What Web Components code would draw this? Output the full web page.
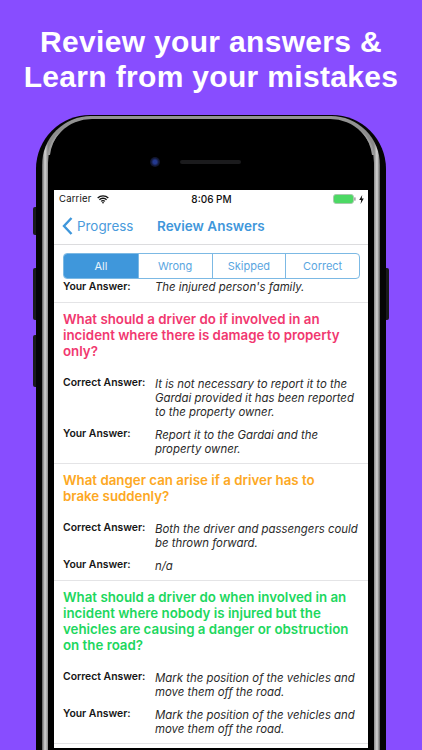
<!DOCTYPE html>
<html>
<head>
<meta charset="utf-8">
<style>
  html, body { margin: 0; padding: 0; background: #884dff; }
  body { width: 422px; height: 750px; overflow: hidden; font-family: Inter, "Liberation Sans", sans-serif; }
</style>
</head>
<body>
<promo-screen>
  <span slot="title">Review your answers &amp;<br>Learn from your mistakes</span>
  <phone-frame>
    <status-bar></status-bar>
    <nav-bar back="Progress" title="Review Answers"></nav-bar>
    <seg-control items="All,Wrong,Skipped,Correct"></seg-control>
    <answer-list>
      <answer-row label="Your Answer:" class="tail">The injured person's family.</answer-row>
      <q-card color="#f1386f" text="What should a driver do if involved in an incident where there is damage to property only?">
        <answer-row label="Correct Answer:">It is not necessary to report it to the Gardai provided it has been reported to the property owner.</answer-row>
        <answer-row label="Your Answer:">Report it to the Gardai and the property owner.</answer-row>
      </q-card>
      <q-card color="#fda823" text="What danger can arise if a driver has to brake suddenly?">
        <answer-row label="Correct Answer:">Both the driver and passengers could be thrown forward.</answer-row>
        <answer-row label="Your Answer:">n/a</answer-row>
      </q-card>
      <q-card color="#1dd75e" text="What should a driver do when involved in an incident where nobody is injured but the vehicles are causing a danger or obstruction on the road?">
        <answer-row label="Correct Answer:">Mark the position of the vehicles and move them off the road.</answer-row>
        <answer-row label="Your Answer:">Mark the position of the vehicles and move them off the road.</answer-row>
      </q-card>
    </answer-list>
  </phone-frame>
</promo-screen>

<script>
class PromoScreen extends HTMLElement {
  constructor() {
    super();
    this.attachShadow({ mode: 'open' });
    this.shadowRoot.innerHTML = `
      <style>
        :host { display: block; width: 422px; height: 750px; overflow: hidden; background: #884dff; }
        h1 {
          margin: 0;
          padding-top: 24px;
          height: 115px;
          box-sizing: border-box;
          text-align: center;
          color: #fff;
          font: 700 30px/35px "Liberation Sans", sans-serif;
          letter-spacing: .33px;
        }
      </style>
      <h1><slot name="title"></slot></h1>
      <slot></slot>
    `;
  }
}

class PhoneFrame extends HTMLElement {
  constructor() {
    super();
    this.attachShadow({ mode: 'open' });
    this.shadowRoot.innerHTML = `
      <style>
        :host { display: block; position: relative; width: 350px; margin-left: 36px; }
        .body {
          box-sizing: border-box;
          height: 635px;
          padding: 1px 6px 0;
          border-radius: 54px 54px 0 0;
          background: #050505;
        }
        .rim {
          box-sizing: border-box;
          height: 100%;
          padding: 3px 6px 0;
          border-radius: 49px 49px 0 0;
          background: linear-gradient(90deg, #5c5c5c 0, #d5d5d5 3px, #8a8a8a 6px, #939393 30px,
            #939393 calc(100% - 30px), #8a8a8a calc(100% - 6px), #d5d5d5 calc(100% - 3px), #5c5c5c 100%);
        }
        .inner {
          box-sizing: border-box;
          height: 100%;
          padding: 71px 6px 2px;
          border-radius: 44px 44px 0 0;
          background: #000;
          position: relative;
        }
        .camera {
          position: absolute; left: 102px; top: 38px; width: 10px; height: 10px; border-radius: 50%;
          background: radial-gradient(circle, #24398f 0 25%, #121836 55%, #0a0a0e 100%);
        }
        .speaker {
          position: absolute; left: 132px; top: 41px; width: 61px; height: 4px; border-radius: 2px;
          background: #1b1b1d;
        }
        .screen { height: 100%; background: #fff; display: flex; flex-direction: column; overflow: hidden; }
        .btn { position: absolute; background: #1a1a1c; width: 3px; }
        /* small glints where the rim turns into the corners */
        .glint { position: absolute; top: 0; left: 0; width: 350px; height: 60px; pointer-events: none; }
      </style>
      <div class="btn" style="left:-3px;top:92px;height:28px;border-radius:2px 0 0 2px"></div>
      <div class="btn" style="left:-3px;top:153px;height:52px;border-radius:2px 0 0 2px"></div>
      <div class="btn" style="left:-3px;top:220px;height:52px;border-radius:2px 0 0 2px"></div>
      <div class="btn" style="right:-3px;top:153px;height:52px;border-radius:0 2px 2px 0"></div>
      <div class="body"><div class="rim"><div class="inner">
        <div class="camera"></div>
        <div class="speaker"></div>
        <div class="screen"><slot></slot></div>
      </div></div></div>
      <svg class="glint" viewBox="0 0 350 60">
        <path d="M25 16Q14 24 11.5 40L14 40Q15.500 27 25 16Z" fill="#9c9c9c"/>
        <path d="M325 16Q336 24 338.500 40L336 40Q334.500 27 325 16Z" fill="#9c9c9c"/>
      </svg>
    `;
  }
}

class StatusBar extends HTMLElement {
  constructor() {
    super();
    this.attachShadow({ mode: 'open' });
    this.shadowRoot.innerHTML = `
      <style>
        :host {
          display: grid; grid-template-columns: 1fr auto 1fr; align-items: center;
          height: 18px; flex: none; padding: 0 4px 0 5px; color: #111;
          font: 400 9.5px/18px Inter, sans-serif;
        }
        .l { display: flex; align-items: center; gap: 5px; letter-spacing: .2px; }
        .t { font-weight: 500; font-size: 10px; }
        .r { display: flex; justify-content: flex-end; align-items: center; gap: 3px; }
        .batt { display: block; }
      </style>
      <div class="l">Carrier
        <svg width="12" height="9" viewBox="0 0 13 10"><path d="M.6 3.4a8.3 8.3 0 0 1 11.8 0M2.5 5.3a5.6 5.6 0 0 1 8 0M4.4 7.1a2.9 2.9 0 0 1 4.2 0" fill="none" stroke="#111" stroke-width="1.5"/><path d="M6.5 9.8 5.2 8.4a1.9 1.9 0 0 1 2.6 0z" fill="#111"/></svg>
      </div>
      <div class="t">8:06 PM</div>
      <div class="r">
        <svg class="batt" width="23" height="10" viewBox="0 0 23 10"><rect x=".5" y=".5" width="20" height="9" rx="2.4" fill="#4cd964" stroke="#a9c9ae"/><rect x="21.3" y="3.4" width="1.2" height="3.2" fill="#888"/></svg>
        <svg width="5" height="9" viewBox="0 0 5 9"><path d="M3.2 0 .2 5h2L1.6 9l3.2-5.4h-2z" fill="#111"/></svg>
      </div>
    `;
  }
}

class NavBar extends HTMLElement {
  constructor() {
    super();
    this.attachShadow({ mode: 'open' });
    this.shadowRoot.innerHTML = `
      <style>
        :host {
          display: flex; align-items: center; flex: none; height: 36px; position: relative;
          border-bottom: 1px solid #dcdcde; color: #3f97db; font: 400 13.4px/36px Inter, sans-serif;
        }
        .back { display: flex; align-items: center; gap: 4px; padding-left: 8px; color: #4a9bdc; }
        .title { position: absolute; left: 103px; font-weight: 600; font-size: 13.5px; }
      </style>
      <div class="back">
        <svg width="11" height="18" viewBox="0 0 11 18"><path d="M9.5 1 2 9l7.5 8" fill="none" stroke="#3f97db" stroke-width="2.4"/></svg>
        <span>${this.getAttribute('back')}</span>
      </div>
      <div class="title">${this.getAttribute('title')}</div>
    `;
  }
}

class SegControl extends HTMLElement {
  constructor() {
    super();
    this.attachShadow({ mode: 'open' });
    const items = this.getAttribute('items').split(',');
    this.shadowRoot.innerHTML = `
      <style>
        :host { display: block; flex: none; padding: 8px 8px 0 9px; background: #fff; }
        .seg {
          display: grid; grid-template-columns: repeat(4, 1fr); height: 26px; box-sizing: border-box;
          border: 1px solid #7cb9e4; border-radius: 4px; overflow: hidden;
          font: 400 11px/24px Inter, sans-serif; color: #5aa6df; text-align: center;
        }
        .seg div + div { border-left: 1px solid #7cb9e4; }
        .on { background: #3f97db; color: #eaf4fb; }
      </style>
      <div class="seg">
        ${items.map((t, i) => `<div class="${i === 0 ? 'on' : ''}">${t}</div>`).join('')}
      </div>
    `;
  }
}

class AnswerList extends HTMLElement {
  constructor() {
    super();
    this.attachShadow({ mode: 'open' });
    this.shadowRoot.innerHTML = `
      <style>
        :host { display: block; flex: 1; min-height: 0; overflow: hidden; }
        ::slotted(.tail) { padding: 1px 0 8px 9px; border-bottom: 1px solid #e4e4e6; }
      </style>
      <slot></slot>
    `;
  }
}

class QCard extends HTMLElement {
  constructor() {
    super();
    this.attachShadow({ mode: 'open' });
    this.shadowRoot.innerHTML = `
      <style>
        :host { display: block; padding: 8px 9px 7px; border-bottom: 1px solid #e4e4e6; }
        h2 {
          margin: 0 0 18px; padding-right: 8px; font: 600 13.3px/16px Inter, sans-serif;
          color: ${this.getAttribute('color')};
        }
        .rows { display: flex; flex-direction: column; gap: 9px; }
      </style>
      <h2>${this.getAttribute('text')}</h2>
      <div class="rows"><slot></slot></div>
    `;
  }
}

class AnswerRow extends HTMLElement {
  constructor() {
    super();
    this.attachShadow({ mode: 'open' });
    this.shadowRoot.innerHTML = `
      <style>
        :host { display: grid; grid-template-columns: 92px 1fr; }
        :host(.tail) b { line-height: 13px; }
        b { font: 600 10.4px/12px Inter, sans-serif; color: #151515; }
        span { font: italic 400 11.4px/14px Inter, sans-serif; color: #2a2a2a; margin-right: -4px; }
      </style>
      <b>${this.getAttribute('label')}</b>
      <span><slot></slot></span>
    `;
  }
}

customElements.define('promo-screen', PromoScreen);
customElements.define('phone-frame', PhoneFrame);
customElements.define('status-bar', StatusBar);
customElements.define('nav-bar', NavBar);
customElements.define('seg-control', SegControl);
customElements.define('answer-list', AnswerList);
customElements.define('q-card', QCard);
customElements.define('answer-row', AnswerRow);
</script>
</body>
</html>
